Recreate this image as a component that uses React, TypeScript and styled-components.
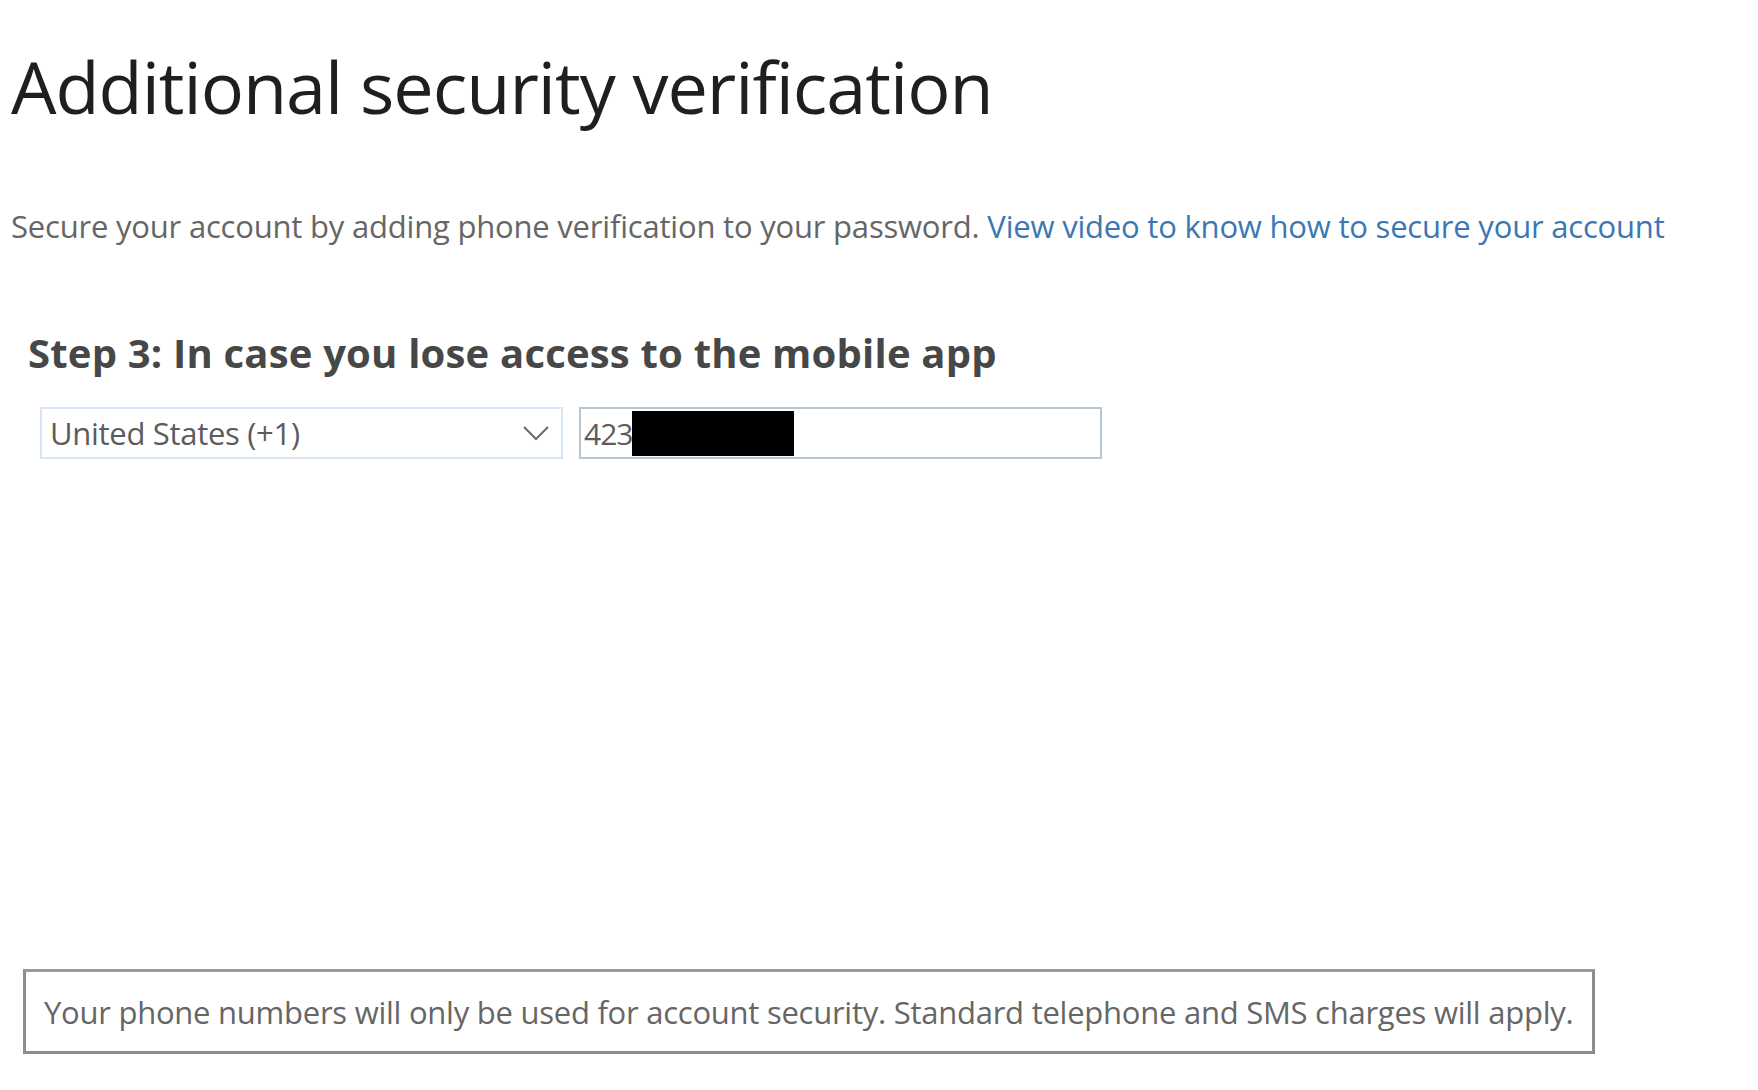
import styled, { createGlobalStyle } from 'styled-components';

const GlobalStyle = createGlobalStyle`
  html, body {
    margin: 0;
    padding: 0;
    background: #ffffff;
  }
  body {
    font-family: 'Open Sans', 'Noto Sans', 'Liberation Sans', sans-serif;
  }
`;

const Page = styled.div`
  width: 1758px;
  height: 1090px;
  box-sizing: border-box;
  padding: 0 0 0 11px;
  display: flex;
  flex-direction: column;
  background: #ffffff;
`;

const Title = styled.h1`
  margin: 38px 0 0 0;
  font-size: 72px;
  font-weight: 400;
  letter-spacing: -1px;
  line-height: 96px;
  color: #1f1f1f;
`;

const Intro = styled.p`
  margin: 72px 0 0 0;
  font-size: 31px;
  line-height: 40px;
  letter-spacing: -0.2px;
  color: #666666;
`;

const IntroLink = styled.a`
  color: #3a78b4;
  text-decoration: none;
`;

const Step = styled.section`
  margin: 82px 0 0 17px;
  display: flex;
  flex-direction: column;
  gap: 29px;
`;

const StepTitle = styled.h2`
  margin: 0;
  font-size: 40px;
  line-height: 50px;
  font-weight: 700;
  letter-spacing: 0.2px;
  color: #474747;
`;

const PhoneRow = styled.div`
  display: flex;
  gap: 16px;
  margin-left: 12px;
`;

const Field = styled.div<{ $border: string; $pad: number }>`
  width: 523px;
  height: 52px;
  box-sizing: border-box;
  border: 2px solid ${(p) => p.$border};
  display: flex;
  align-items: center;
  padding: 0 8px 0 ${(p) => p.$pad}px;
  font-size: 31px;
  letter-spacing: -0.3px;
  color: #5c5c5c;
  background: #ffffff;
`;

const SelectText = styled.span`
  flex: 1;
`;

const Chevron = styled.svg`
  width: 30px;
  height: 20px;
  margin-right: 2px;
`;

const Digits = styled.span`
  font-size: 30px;
  letter-spacing: -1px;
`;

const Redaction = styled.span`
  width: 162px;
  height: 45px;
  background: #000000;
`;

const Spacer = styled.div`
  flex: 1;
`;

const Notice = styled.div`
  margin: 0 0 36px 12px;
  width: 1572px;
  height: 85px;
  box-sizing: border-box;
  border: 3px solid #8c8c8c;
  border-top-color: #9a9a9a;
  display: flex;
  align-items: center;
  padding: 0 0 0 18px;
  font-size: 31px;
  letter-spacing: -0.25px;
  color: #666666;
`;

export default function App() {
  return (
    <>
      <GlobalStyle />
      <Page>
        <Title>Additional security verification</Title>
        <Intro>
          Secure your account by adding phone verification to your password.{' '}
          <IntroLink href="#">View video to know how to secure your account</IntroLink>
        </Intro>
        <Step>
          <StepTitle>Step 3: In case you lose access to the mobile app</StepTitle>
          <PhoneRow>
            <Field $border="#d6e6f4" $pad={8}>
              <SelectText>United States (+1)</SelectText>
              <Chevron viewBox="0 0 30 20" fill="none" stroke="#6a6a6a" strokeWidth="2">
                <path d="M3 4 L15 16 L27 4" />
              </Chevron>
            </Field>
            <Field $border="#b7c6d3" $pad={3}>
              <Digits>423</Digits>
              <Redaction />
            </Field>
          </PhoneRow>
        </Step>
        <Spacer />
        <Notice>
          Your phone numbers will only be used for account security. Standard telephone and SMS charges will apply.
        </Notice>
      </Page>
    </>
  );
}
